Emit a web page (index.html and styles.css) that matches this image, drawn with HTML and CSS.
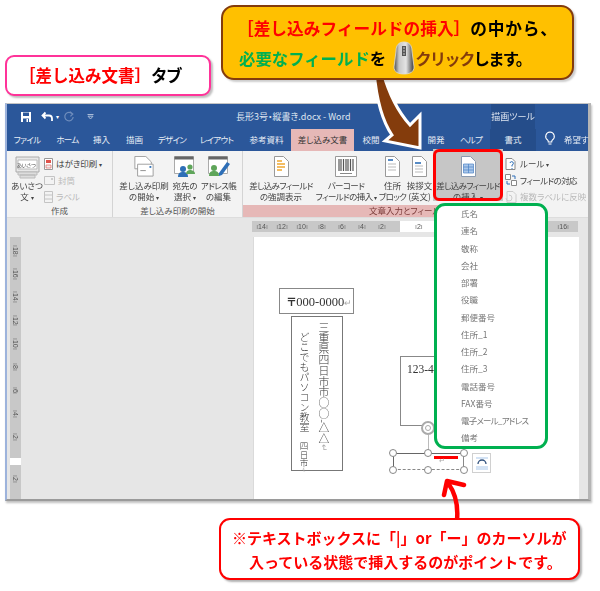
FILE: index.html
```html
<!DOCTYPE html>
<html lang="ja">
<head>
<meta charset="utf-8">
<title>差し込みフィールドの挿入</title>
<link rel="stylesheet" href="styles.css">
</head>
<body>
<div class="stage">
  <section class="word">
    <header class="titlebar">
      <div class="qat">
        <svg class="qat-icon" width="12" height="12" viewBox="0 0 12 12"><path d="M1 1h10v10H1z" fill="#fff"/><path d="M3 1.500h6v3.500H3z" fill="#2b579a"/><path d="M3 7.500h6V11H3z" fill="#2b579a"/><path d="M6.500 8h1.500v3H6.500z" fill="#fff"/></svg>
        <svg class="qat-icon undo" width="13" height="12" viewBox="0 0 13 12"><path d="M4.500 1.500 1.500 4.500l3 3M2 4.500h6a3 3 0 0 1 3 3V10" fill="none" stroke="#fff" stroke-width="1.800"/></svg>
        <span class="qat-caret">▾</span>
        <svg class="qat-icon redo" width="12" height="12" viewBox="0 0 12 12"><path d="M9.500 3.200A4.200 4.200 0 1 0 10.200 6M7 .8l2.800 2.200L7.400 5.400" fill="none" stroke="#6f8dbc" stroke-width="1.200"/></svg>
        <svg class="qat-icon more" width="7" height="6" viewBox="0 0 7 6"><path d="M.5.5h6M1 2.200h5L3.500 5z" fill="none" stroke="#a9bcd8"/></svg>
      </div>
      <div class="doc-title">長形3号・縦書き.docx - Word</div>
      <div class="tool-label">描画ツール</div>
    </header>
    <nav class="tabs">
      <span class="tab kana">ファイル</span>
      <span class="tab kana">ホーム</span>
      <span class="tab">挿入</span>
      <span class="tab">描画</span>
      <span class="tab kana">デザイン</span>
      <span class="tab kana">レイアウト</span>
      <span class="tab">参考資料</span>
      <span class="tab tab-active">差し込み文書</span>
      <span class="tab">校閲</span>
      <span class="tab"></span>
      <span class="tab">開発</span>
      <span class="tab kana">ヘルプ</span>
      <span class="tab tab-tool">書式</span>
      <span class="tab"><svg width="12" height="15" viewBox="0 0 12 15"><path d="M6 1a4.400 4.400 0 0 0-2.400 8c.5.4.7 1 .7 2h3.400c0-1 .2-1.600.7-2A4.400 4.400 0 0 0 6 1zM4.500 13h3" fill="none" stroke="#fff" stroke-width="1.100"/></svg></span>
      <span class="tab tab-cut">希望す</span>
    </nav>
    <div class="ribbon">
      <div class="group g-create">
        <div class="group-body">
          <div class="big greet">
            <svg width="25" height="23" viewBox="0 0 25 23"><path d="M1 1h23v15H1z" fill="#e8e8e8" stroke="#aaa"/><path d="M3 16h19v3H3zM5 19h15v3H5z" fill="#ddd" stroke="#bbb"/><path d="M3 4h19v9H3z" fill="#fff" stroke="#bbb"/></svg>
            <span class="greet-word">あいさつ</span>
            <span class="cap">あいさつ</span><span class="cap">文 <i>▾</i></span>
          </div>
          <div class="small-col">
            <div class="small"><svg width="9" height="12" viewBox="0 0 9 12"><path d="M.5.5h8v11h-8z" fill="#fff" stroke="#999"/><path d="M2 2h5v3H2z" fill="#e0524a"/><path d="M2 7h5v3H2z" fill="#eee" stroke="#e0524a" stroke-width=".6"/></svg><span>はがき印刷 <i>▾</i></span></div>
            <div class="small off"><svg width="11" height="9" viewBox="0 0 11 9"><path d="M.5.5h10v8H.5z" fill="#f3f3f3" stroke="#c4c4c4"/><path d="M7 2h2v2H7z" fill="#ccc"/></svg><span>封筒</span></div>
            <div class="small off"><svg width="9" height="12" viewBox="0 0 9 12"><path d="M.5.5h8v11h-8zM.5 4h8M.5 8h8" fill="#f3f3f3" stroke="#c4c4c4"/></svg><span>ラベル</span></div>
          </div>
        </div>
        <div class="group-label">作成</div>
      </div>
      <div class="group g-start">
        <div class="group-body">
          <div class="big w-start">
            <svg width="22" height="23" viewBox="0 0 22 23"><path d="M1 .5h12l6 6V14H1z" fill="#fff" stroke="#999"/><path d="M4 9h17v13H4z" fill="#fff" stroke="#999"/><path d="M7 16h6" stroke="#888"/><path d="M17 11h2v2h-2z" fill="#2e6fb7"/></svg>
            <span class="cap">差し込み印刷</span><span class="cap">の開始 <i>▾</i></span>
          </div>
          <div class="big w-dest">
            <svg width="22" height="21" viewBox="0 0 22 21"><path d="M.5.5h19v17H.5z" fill="#fff" stroke="#aaa"/><path d="M.5.5h19v3H.5z" fill="#666"/><circle cx="9" cy="13" r="3" fill="#2e6fb7"/><path d="M4 21c0-4 2-5 5-5s5 1 5 5z" fill="#2e6fb7"/><circle cx="16" cy="11" r="2.600" fill="#5fa55a"/><path d="M12 18c0-3 2-4 4-4s5 1 5 4z" fill="#5fa55a"/></svg>
            <span class="cap">宛先の</span><span class="cap">選択 <i>▾</i></span>
          </div>
          <div class="big w-addr">
            <svg width="22" height="21" viewBox="0 0 22 21"><path d="M.5.5h19v17H.5z" fill="#fff" stroke="#aaa"/><path d="M.5.5h19v3H.5z" fill="#666"/><circle cx="6" cy="12" r="3" fill="#5fa55a"/><path d="M1 20c0-4 2-5 5-5s5 1 5 5z" fill="#5fa55a"/><path d="M11 17 19 6l3 2-8 11-3 1z" fill="#2e6fb7"/></svg>
            <span class="cap tight">アドレス帳</span><span class="cap">の編集</span>
          </div>
        </div>
        <div class="group-label">差し込み印刷の開始</div>
      </div>
      <div class="group g-insert">
        <div class="group-body">
          <div class="big w-high">
            <svg width="15" height="21" viewBox="0 0 15 21"><path d="M.5.5h9l5 5v15H.5z" fill="#fff" stroke="#999"/><path d="M3 5h5M3 8h8M3 11h8M3 14h5" stroke="#f0a830" stroke-width="1.300"/></svg>
            <span class="cap tight">差し込みフィールド</span><span class="cap">の強調表示</span>
          </div>
          <div class="big w-bar">
            <svg width="22" height="21" viewBox="0 0 22 21"><path d="M.5.5h21v20H.5z" fill="#fff" stroke="#999"/><path d="M4 3v12M6 3v12M8.500 3v12M11 3v12M13 3v12M15.500 3v12M18 3v12" stroke="#555" stroke-width="1.200"/><path d="M5 17.500h12" stroke="#888"/></svg>
            <span class="cap tight">バーコード</span><span class="cap tight">フィールドの挿入 <i>▾</i></span>
          </div>
          <div class="big w-block">
            <svg width="15" height="21" viewBox="0 0 15 21"><path d="M.5.5h9l5 5v15H.5z" fill="#fff" stroke="#999"/><path d="M3 4h5" stroke="#2e6fb7" stroke-width="1.600"/><path d="M3 8h8M3 11h8M3 14h8" stroke="#bbb"/></svg>
            <span class="cap">住所</span><span class="cap tight">ブロック</span>
          </div>
          <div class="big w-block">
            <svg width="15" height="21" viewBox="0 0 15 21"><path d="M.5.5h9l5 5v15H.5z" fill="#fff" stroke="#999"/><path d="M3 7h6" stroke="#2e6fb7" stroke-width="1.600"/><path d="M3 10h8M3 13h8M3 16h8" stroke="#bbb"/></svg>
            <span class="cap">挨拶文</span><span class="cap">(英文)</span>
          </div>
          <div class="big w-field">
            <svg width="15" height="21" viewBox="0 0 15 21"><path d="M.5.5h9l5 5v15H.5z" fill="#fff" stroke="#8a9ab0"/><path d="M2.500 8h10v9h-10z" fill="#a9c7ea" stroke="#4a83c5" stroke-width=".7"/><path d="M2.500 11h10M2.500 14h10M7.500 8v9" stroke="#4a83c5" stroke-width=".7"/></svg>
            <span class="cap tight">差し込みフィールド</span><span class="cap">の挿入 <i>▾</i></span>
          </div>
          <div class="small-col rule-col">
            <div class="small"><svg width="12" height="12" viewBox="0 0 12 12"><path d="M1 .5h6l3 3v8H1z" fill="#fff" stroke="#888"/><path d="M5 5a1.700 1.700 0 1 1 2 2v1.500M7 10v1" fill="none" stroke="#2e6fb7"/></svg><span>ルール <i>▾</i></span></div>
            <div class="small"><svg width="12" height="12" viewBox="0 0 12 12"><path d="M.5.5h5v5h-5zM6.500 6.500h5v5h-5z" fill="#fff" stroke="#888"/><path d="M7 2h3v3M5 10H2V7" fill="none" stroke="#2e6fb7"/></svg><span class="tight">フィールドの対応</span></div>
            <div class="small off"><svg width="12" height="12" viewBox="0 0 12 12"><path d="M2 .5h6l3 3v8H2z" fill="#f3f3f3" stroke="#ccc"/><path d="M1 7a3 3 0 1 0 3-3" fill="none" stroke="#ccc"/></svg><span>複数ラベルに反映</span></div>
          </div>
        </div>
        <div class="group-label label-pink">文章入力とフィールド</div>
      </div>
    </div>
    <div class="workspace">
      <div class="h-ruler">
        <span class="rule-gray"><b>14</b><b>12</b><b>10</b><b>8</b><b>6</b><b>4</b><b>2</b></span>
        <span class="rule-white"><b>2</b></span>
        <span class="rule-end"><b>16</b></span>
      </div>
      <div class="work-body">
        <div class="v-ruler">
          <b>18</b><b>16</b><b>14</b><b>12</b><b>10</b><b>8</b><b>6</b><b>4</b><b>2</b>
          <em class="v-white"></em>
          <b>2</b>
        </div>
        <div class="gutter"></div>
        <div class="page">
          <div class="postal"><strong>〒</strong>000-0000<span class="ret">↵</span></div>
          <div class="address">
            <p>三重県四日市市○○-△△<span class="ret">↵</span></p>
            <p>どこでもパソコン教室　<span class="squeeze">四日市</span><span class="ret ret-small">↵</span></p>
          </div>
          <div class="zip-box">123-45</div>
          <div class="rotate"></div>
          <div class="rotate-line"></div>
          <div class="sel-box">
            <i class="h h1"></i><i class="h h2"></i><i class="h h3"></i><i class="h h4"></i><i class="h h5"></i><i class="h h6"></i>
            <span class="caret-bar"></span>
            <span class="ret sel-ret">↵</span>
          </div>
          <div class="layout-btn"><svg width="14" height="14" viewBox="0 0 14 14"><path d="M1 2h12M1 11h12M1 13h12" stroke="#a9c7ea"/><path d="M3 8a4 4 0 0 1 8 0" fill="none" stroke="#33537f" stroke-width="1.300"/></svg></div>
        </div>
        <div class="scroll"></div>
      </div>
    </div>
  </section>

  <div class="note note-tab"><span class="red">［差し込み文書］</span><span class="tab-word">タブ</span></div>

  <svg class="arrow-brown" width="80" height="90" viewBox="360 70 80 90"><path d="M374 72 Q378 115 392 135 L385 141 L420 148 L420 115 L410 125 Q392 105 383 72 Z" fill="#843c0c" stroke="#fff" stroke-width="3"/></svg>

  <div class="note note-main">
    <div class="main-line line-one"><span class="red">［差し込みフィールドの挿入］</span><span class="wide">の中から、</span></div>
    <div class="main-line main-line2"><span class="green">必要なフィールド</span>を<svg class="mouse" width="22" height="34" viewBox="0 0 22 34"><defs><linearGradient id="mg" x1="0" x2="1"><stop offset="0" stop-color="#4a4a4a"/><stop offset=".25" stop-color="#c8c8c8"/><stop offset=".6" stop-color="#e4e4e4"/><stop offset="1" stop-color="#3a3a3a"/></linearGradient></defs><path d="M11 1c5 0 8 3 8 9l2 16c0 5-4 7-10 7S1 31 1 26l2-16C3 4 6 1 11 1z" fill="url(#mg)" stroke="#ddd" stroke-width=".8"/><path d="M9 5h4v10H9z" fill="#555"/><path d="M10 7h2M10 10h2M10 13h2" stroke="#ccc"/></svg><span class="brown narrow">クリック</span><span class="narrow">します。</span></div>
  </div>

  <div class="panel">
    <ul class="fields">
      <li>氏名</li><li>連名</li><li>敬称</li><li>会社</li><li>部署</li><li>役職</li><li>郵便番号</li><li>住所_1</li><li>住所_2</li><li>住所_3</li><li>電話番号</li><li>FAX番号</li><li class="squeeze-item">電子メール_アドレス</li><li>備考</li>
    </ul>
  </div>
  <div class="red-frame"></div>

  <svg class="arrow-red" width="40" height="50" viewBox="435 472 40 50"><path d="M457 520 Q459 498 448 483 M444 495 447 481 464 485" fill="none" stroke="#f00" stroke-width="4.500" stroke-linecap="round" stroke-linejoin="round"/></svg>

  <div class="note note-bottom">
    <div>※テキストボックスに「|」or「ー」のカーソルが</div>
    <div class="bottom-line2">入っている状態で挿入するのがポイントです。</div>
  </div>
</div>
</body>
</html>
```

FILE: styles.css
```css
html, body { margin: 0; padding: 0; background: #fff; }
body {
  width: 600px;
  height: 591px;
  overflow: hidden;
  font-family: "Noto Sans CJK JP", "Noto Sans", sans-serif;
  font-feature-settings: "palt";
}
.stage {
  position: relative;
  width: 600px;
  height: 591px;
  padding: 103px 0 0 5px;
  box-sizing: border-box;
  filter: blur(0.4px);
}

/* Word window */
.word {
  width: 586px;
  height: 398px;
  border: 1px solid #c4c4c4;
  border-left: 2px solid #9db3dc;
  border-right: 3px solid #b5b5b5;
  border-bottom: 2px solid #9a9a9a;
  box-sizing: border-box;
  display: flex;
  flex-direction: column;
  background: #e6e6e6;
  box-shadow: 1px 2px 2px rgba(0,0,0,.25);
}
.titlebar {
  height: 25px;
  flex: none;
  background: #2b579a;
  display: flex;
  align-items: center;
  color: #dfe6f1;
  font-size: 9px;
  position: relative;
}
.qat { display: flex; align-items: center; width: 229px; padding-left: 13px; box-sizing: border-box; }
.qat-icon { display: block; flex: none; }
.undo { margin-left: 9px; }
.qat-caret { font-size: 6px; margin-left: 2px; color: #fff; }
.redo { margin-left: 4px; }
.more { margin-left: 12px; }
.doc-title { width: 255px; white-space: nowrap; }
.tool-label {
  position: absolute;
  left: 484px;
  top: 0;
  width: 44px;
  height: 25px;
  line-height: 25px;
  background: #254d8a;
  text-align: center;
  white-space: nowrap;
}
.tabs {
  height: 22px;
  flex: none;
  background: #2b579a;
  display: grid;
  grid-template-columns: 40px 41px 27px 39px 36px 53px 47px 64px 34px 32px 32px 38px 46px 28px 26px;
  color: #e8edf5;
  font-size: 8.500px;
  line-height: 20px;
  text-align: center;
  white-space: nowrap;
}
.tab { display: block; overflow: hidden; }
.tab svg { display: block; margin: 2px auto 0; }
.kana { letter-spacing: -0.7px; }
.tab-active { background: #e6b8b7; color: #333; margin-left: 1px; }
.tab-tool { background: #254d8a; }
.tab-cut { text-align: left; }

.ribbon {
  height: 67px;
  flex: none;
  background: #f3f3f3;
  display: flex;
  color: #444;
  font-size: 8.500px;
  line-height: 11px;
  border-bottom: 1px solid #ddd;
  box-sizing: border-box;
}
.group { display: flex; flex-direction: column; height: 66px; }
.group-body { flex: 1; display: flex; min-height: 0; }
.group-label { height: 12px; line-height: 11px; text-align: center; font-size: 8.500px; color: #555; flex: none; }
.g-create { width: 106px; border-right: 1px solid #d4d4d4; box-sizing: border-box; }
.g-start { width: 130px; border-right: 1px solid #d4d4d4; box-sizing: border-box; }
.g-insert { width: 340px; }
.label-pink {
  width: 258px;
  background: #e6b8b7;
  padding-left: 126px;
  box-sizing: border-box;
  text-align: left;
  color: #7a3a38;
  white-space: nowrap;
}
.big {
  display: flex;
  flex-direction: column;
  align-items: center;
  flex: none;
  padding-top: 5px;
  box-sizing: border-box;
  position: relative;
}
.big svg { display: block; height: 21px; margin-bottom: 3px; flex: none; }
.cap { display: block; white-space: nowrap; height: 11px; }
.tight { letter-spacing: -0.6px; }
.cap i, .small i { font-style: normal; font-size: 6px; }
.greet { width: 34px; padding-top: 5px; margin-left: 3px; }
.greet svg { height: 23px; margin-bottom: 1px; }
.greet-word { position: absolute; top: 10px; left: 7px; font-size: 5px; line-height: 7px; white-space: nowrap; }
.small-col { display: flex; flex-direction: column; padding-top: 5px; font-size: 8.500px; }
.small { display: flex; align-items: center; gap: 3px; height: 16.500px; white-space: nowrap; }
.small svg { display: block; flex: none; }
.off { color: #b9b9b9; }
.w-start { width: 50px; margin-left: 6px; }
.w-dest { width: 30px; margin-left: 1px; }
.w-addr { width: 37px; }
.w-high { width: 64px; margin-left: 6px; }
.w-bar { width: 66px; }
.w-block { width: 27px; }
.w-field { width: 70px; height: 52px; background: #c6c6c6; margin-top: -2px; padding-top: 7px; }
.rule-col { margin-left: 2px; }

.workspace { flex: 1; display: flex; flex-direction: column; min-height: 0; background: #e6e6e6; }
.h-ruler {
  height: 11px;
  margin: 3px 0 0 245px;
  width: 326px;
  flex: none;
  display: flex;
  font-size: 7px;
  line-height: 11px;
  color: #555;
  background: #c8c8c8;
  font-family: "Liberation Sans", sans-serif;
}
.rule-gray { width: 148px; display: flex; box-sizing: border-box; }
.rule-gray b { width: 20px; font-weight: 400; text-align: center; }
.rule-white { width: 130px; background: #fff; padding-left: 15px; box-sizing: border-box; }
.rule-white b, .rule-end b { font-weight: 400; }
.h-ruler b::before, .h-ruler b::after, .v-ruler b::before, .v-ruler b::after { content: "ı"; color: #777; }
.rule-end { flex: 1; text-align: right; padding-right: 9px; }
.work-body { flex: 1; display: flex; min-height: 0; margin-top: 5px; }
.v-ruler {
  width: 11px;
  margin-left: 3px;
  flex: none;
  background: #c8c8c8;
  display: flex;
  flex-direction: column;
  align-items: center;
  font-size: 7px;
  color: #555;
  font-family: "Liberation Sans", sans-serif;
  padding-top: 2px;
  box-sizing: border-box;
}
.v-ruler b { height: 23.300px; writing-mode: vertical-rl; font-weight: 400; text-align: center; flex: none; width: 11px; line-height: 11px; white-space: pre; word-spacing: 1px; }
.v-white { display: block; width: 11px; height: 7px; background: #fff; margin: 9px 0 3px; flex: none; }
.gutter { width: 232px; flex: none; }
.page {
  width: 326px;
  flex: none;
  background: #fff;
  position: relative;
  overflow: hidden;
  border-left: 1px solid #dadada;
  box-sizing: border-box;
  font-family: "Liberation Serif", "Noto Sans CJK JP", serif;
  color: #444;
}
.scroll { flex: 1; background: #e6e6e6; }
.ret { color: #aaa; font-size: 9px; }
.postal {
  position: absolute;
  left: 25px;
  top: 51px;
  width: 75px;
  height: 26px;
  border: 1px solid #888;
  box-sizing: border-box;
  font-size: 12.500px;
  line-height: 24px;
  padding-left: 7px;
  white-space: nowrap;
  color: #333;
}
.postal strong { font-family: "Noto Sans CJK JP", sans-serif; font-size: 11px; font-weight: 900; }
.address {
  position: absolute;
  left: 37px;
  top: 79px;
  width: 52px;
  height: 155px;
  border: 1px solid #777;
  box-sizing: border-box;
  writing-mode: vertical-rl;
  font-family: "Noto Sans CJK JP", sans-serif;
  font-weight: 300;
  font-size: 10.800px;
  line-height: 19px;
  padding: 5px 8px 0 0;
  white-space: nowrap;
  color: #333;
}
.address p { margin: 0; font-feature-settings: normal; }
.address p + p { padding-top: 10px; font-size: 10px; }
.squeeze { font-size: 8.500px; }
.ret-small { font-size: 5px; }
.zip-box {
  position: absolute;
  left: 146px;
  top: 119px;
  width: 60px;
  height: 70px;
  border: 1px solid #888;
  box-sizing: border-box;
  font-size: 11.500px;
  line-height: 24px;
  padding-left: 6px;
  color: #333;
}
.rotate {
  position: absolute;
  left: 167px;
  top: 184px;
  width: 14px;
  height: 14px;
  border: 2px solid #aaa;
  border-radius: 50%;
  background: #fff;
  box-sizing: border-box;
}
.rotate::after {
  content: "";
  display: block;
  width: 6px;
  height: 6px;
  margin: 2px;
  border: 1px solid #aaa;
  border-radius: 50%;
  box-sizing: border-box;
}
.rotate-line { position: absolute; left: 174px; top: 198px; width: 1px; height: 16px; background: #bbb; }
.sel-box {
  position: absolute;
  left: 139px;
  top: 216px;
  width: 71px;
  height: 17px;
  border-top: 1px solid #666;
  border-bottom: 1px dashed #888;
  border-left: 1px solid #666;
  border-right: 1px solid #888;
  box-sizing: border-box;
}
.h { position: absolute; width: 6px; height: 6px; border: 1px solid #888; border-radius: 50%; background: #fff; }
.h1 { left: -5px; top: -5px; }
.h2 { left: 30px; top: -5px; }
.h3 { right: -5px; top: -5px; }
.h4 { left: -5px; bottom: -5px; }
.h5 { left: 30px; bottom: -5px; }
.h6 { right: -5px; bottom: -5px; }
.caret-bar { position: absolute; left: 40px; top: 2px; width: 24px; height: 3px; background: #f00; }
.sel-ret { position: absolute; left: 45px; top: 3px; font-size: 7px; }
.layout-btn {
  position: absolute;
  left: 218px;
  top: 216px;
  width: 19px;
  height: 20px;
  border: 1px solid #d0d0d0;
  box-sizing: border-box;
  display: flex;
  align-items: center;
  justify-content: center;
  background: #fff;
}
.layout-btn svg { display: block; }

/* Annotations over the window */
.note {
  position: absolute;
  box-sizing: border-box;
  font-weight: 700;
  color: #000;
  white-space: nowrap;
  font-feature-settings: normal;
}
.note-tab {
  left: 5px;
  top: 55px;
  width: 206px;
  height: 41px;
  background: #fff;
  border: 2.500px solid #ff3399;
  border-radius: 9px;
  box-shadow: 2px 2px 2px rgba(0,0,0,.25);
  font-size: 16.500px;
  line-height: 36px;
  padding-left: 12px;
}
.tab-word { letter-spacing: -1.500px; }
.note-main {
  left: 221px;
  top: 5px;
  width: 353px;
  height: 75px;
  background: #ffc000;
  border: 2.500px solid #843c0c;
  border-radius: 13px;
  font-size: 16.400px;
  padding: 6px 0 0 14px;
  box-shadow: 2px 2px 2px rgba(0,0,0,.2);
}
.main-line { height: 30px; line-height: 30px; }
.line-one { font-size: 16.700px; }
.wide { letter-spacing: .8px; }
.main-line2 { display: flex; align-items: center; padding-left: 2px; }
.narrow { letter-spacing: -1.800px; }
.mouse { display: block; flex: none; margin: 0 0 0 7px; }
.red { color: #f00; }
.green { color: #00b050; }
.brown { color: #843c0c; }
.arrow-brown { position: absolute; left: 360px; top: 70px; }
.arrow-red { position: absolute; left: 435px; top: 472px; }
.panel {
  position: absolute;
  left: 434px;
  top: 203px;
  width: 114px;
  height: 246px;
  background: #fff;
  border: 3px solid #00b050;
  border-radius: 11px;
  box-sizing: border-box;
}
.fields {
  list-style: none;
  margin: -1px 0 0;
  padding: 0 0 0 24px;
  font-size: 8.500px;
  line-height: 17.250px;
  color: #777;
  white-space: nowrap;
}
.squeeze-item { letter-spacing: -0.8px; }
.red-frame {
  position: absolute;
  left: 433px;
  top: 149px;
  width: 70px;
  height: 52px;
  border: 3px solid #f00;
  border-radius: 6px;
  box-sizing: border-box;
}
.note-bottom {
  left: 219px;
  top: 518px;
  width: 361px;
  height: 62px;
  background: #fff;
  border: 2.500px solid #f00;
  border-radius: 11px;
  box-shadow: 2px 2px 2px rgba(0,0,0,.3);
  color: #f00;
  font-size: 15px;
  line-height: 24px;
  padding: 6px 0 0 11px;
}
.bottom-line2 { padding-left: 17px; }
```
